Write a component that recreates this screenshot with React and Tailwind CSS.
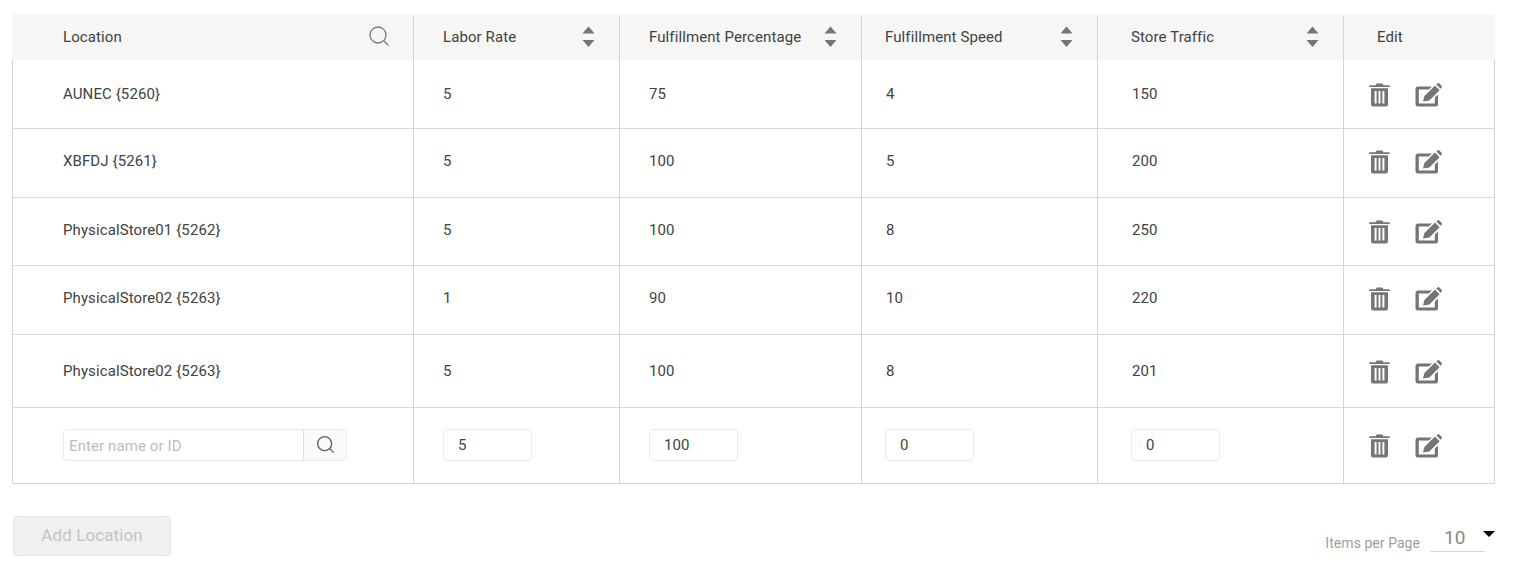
import { Search } from 'lucide-react';

const columns = "grid grid-cols-[401px_206px_242px_236px_246px_152px]";
const headColumns = "grid grid-cols-[402px_206px_242px_236px_246px_151px]";

const rows = [
    { name: "AUNEC {5260}", labor: 5, fill: 75, speed: 4, traffic: 150, h: "h-[69px]", lift: "" },
    { name: "XBFDJ {5261}", labor: 5, fill: 100, speed: 5, traffic: 200, h: "h-[69px]", lift: "pb-1" },
    { name: "PhysicalStore01 {5262}", labor: 5, fill: 100, speed: 8, traffic: 250, h: "h-[68px]", lift: "pb-[2px]" },
    { name: "PhysicalStore02 {5263}", labor: 1, fill: 90, speed: 10, traffic: 220, h: "h-[69px]", lift: "pb-1" },
    { name: "PhysicalStore02 {5263}", labor: 5, fill: 100, speed: 8, traffic: 201, h: "h-[73px]", lift: "" },
];

function SortIcon() {
    return (
        <svg width="13" height="22" viewBox="0 0 13 22" className="-mt-px shrink-0">
            <path d="M6.5 0.5 L12.5 7.5 L0.5 7.5 Z" fill="#757575" />
            <path d="M0.5 14 L12.5 14 L6.5 21 Z" fill="#757575" />
        </svg>
    );
}

function TrashIcon() {
    return (
        <svg width="21" height="24" viewBox="0 0 21 24" fill="#757575">
            <path d="M7.5 0.5 h6 l0.8 1.8 H20 a0.8 0.8 0 0 1 0.8 0.8 v0.9 H0.2 v-0.9 a0.8 0.8 0 0 1 0.8 -0.8 h5.7 Z" />
            <path fillRule="evenodd" d="M2 5.2 H19 V21.5 a2 2 0 0 1 -2 2 H4 a2 2 0 0 1 -2 -2 Z M5.6 8 v12.5 h2 V8 Z M9.5 8 v12.5 h2 V8 Z M13.4 8 v12.5 h2 V8 Z" />
        </svg>
    );
}

function EditIcon() {
    return (
        <svg width="27" height="24" viewBox="0 0 27 24" fill="#757575">
            <path d="M2.8 3.5 H17 L13.8 6.6 H3.8 V20.4 H19.8 V14.6 L23 11.4 V21 a2.5 2.5 0 0 1 -2.5 2.5 H3 a2.5 2.5 0 0 1 -2.5 -2.5 V6 a2.5 2.5 0 0 1 2.3 -2.5 Z" />
            <path d="M20 2.6 L24.6 7.2 L14.4 17.6 L8 18.6 L9.4 13 Z" />
            <path d="M21.4 1.6 L22.4 0.6 a1.4 1.4 0 0 1 2 0 L26.5 2.7 a1.4 1.4 0 0 1 0 2 L25.6 5.8 Z" />
        </svg>
    );
}

function Actions() {
    return (
        <div className="mt-[2px] flex items-center gap-[25px] pl-px">
            <TrashIcon />
            <EditIcon />
        </div>
    );
}

function HeaderCell({ label, pad = "pl-[29px]" }) {
    return (
        <div className={`mt-[2px] flex items-center justify-between pb-[2px] ${pad} pr-[24px] border-r border-[#d4d4d4]`}>
            <span>{label}</span>
            <SortIcon />
        </div>
    );
}

function Cell({ children, pad = "pl-6", lift = "", last }) {
    return (
        <div className={`flex items-center ${pad} ${lift} ${last ? "" : "border-r border-[#d4d4d4]"}`}>
            {children}
        </div>
    );
}

function NumberInput({ value }) {
    return (
        <div className="-mt-[2px] flex h-[32px] w-[89px] items-center rounded-[4px] border border-[#e8eaed] bg-white pl-[14px] pt-[2px] text-[#424242]">
            {value}
        </div>
    );
}

export default function App() {
    return (
        <div className="h-[577px] w-[1513px] overflow-hidden bg-white pl-3 pr-[18px] pt-[14px] font-['Roboto',sans-serif] text-[15px] tracking-[0.1px] text-[#424242]">
            <div className={`${headColumns} h-[46px] bg-[#f6f6f6]`}>
                <div className="mt-[2px] flex items-center justify-between border-r border-[#d4d4d4] pb-[2px] pl-[51px] pr-[22px]">
                    <span>Location</span>
                    <Search size={24} strokeWidth={1.3} color="#757575" className="-mt-[2px]" />
                </div>
                <HeaderCell label="Labor Rate" />
                <HeaderCell label="Fulfillment Percentage" />
                <HeaderCell label="Fulfillment Speed" pad="pl-[23px]" />
                <HeaderCell label="Store Traffic" pad="pl-[33px]" />
                <div className="flex items-center pl-[33px]">Edit</div>
            </div>

            <div className="border-x border-b border-[#d4d4d4]">
                {rows.map((row, i) => (
                    <div key={i} className={`${columns} ${row.h} -mx-px border-b border-[#d9d9d9] border-x border-x-[#d4d4d4]`}>
                        <Cell pad="pl-[50px]" lift={row.lift}>{row.name}</Cell>
                        <Cell pad="pl-[29px]" lift={row.lift}>{row.labor}</Cell>
                        <Cell pad="pl-[29px]" lift={row.lift}>{row.fill}</Cell>
                        <Cell lift={row.lift}>{row.speed}</Cell>
                        <Cell pad="pl-[34px]" lift={row.lift}>{row.traffic}</Cell>
                        <Cell last lift={row.lift}><Actions /></Cell>
                    </div>
                ))}
                <div className={`${columns} -mx-px h-[75px] border-x border-[#d4d4d4]`}>
                    <Cell pad="pl-[50px]">
                        <div className="-mt-[2px] flex h-[32px] w-[284px] rounded-[4px] border border-[#e8eaed]">
                            <div className="flex flex-1 items-center pl-[5px] pt-[4px] text-[#bdbdbd]">Enter name or ID</div>
                            <div className="flex w-[43px] items-center justify-center rounded-r-[4px] border-l border-[#e0e0e0] bg-[#fafafa]">
                                <Search size={21} strokeWidth={1.5} color="#616161" />
                            </div>
                        </div>
                    </Cell>
                    <Cell pad="pl-[29px]"><NumberInput value="5" /></Cell>
                    <Cell pad="pl-[29px]"><NumberInput value="100" /></Cell>
                    <Cell pad="pl-[23px]"><NumberInput value="0" /></Cell>
                    <Cell pad="pl-[33px]"><NumberInput value="0" /></Cell>
                    <Cell last lift="pb-[2px]"><Actions /></Cell>
                </div>
            </div>

            <div className="mt-8 flex items-start justify-between">
                <button className="ml-px h-10 w-[158px] rounded-[4px] border border-[#e8e8e8] bg-[#f0f0f0] text-[17px] tracking-[0.1px] text-[#c4c4c4]">
                    Add Location
                </button>
                <div className="relative mt-[8px] flex items-end pr-[10px] text-[14px] tracking-[0.05px] text-[#9e9e9e]">
                    <span className="-mb-[2px] mr-[10px]">Items per Page</span>
                    <div className="h-[28px] w-[55px] border-b border-[#d6d6d6] pl-[14px] text-[19px] leading-[28px] text-[#8a8a8a]">10</div>
                    <div className="absolute right-0 top-[7px] h-0 w-0 border-x-[6px] border-t-[6px] border-x-transparent border-t-black" />
                </div>
            </div>
        </div>
    );
}
